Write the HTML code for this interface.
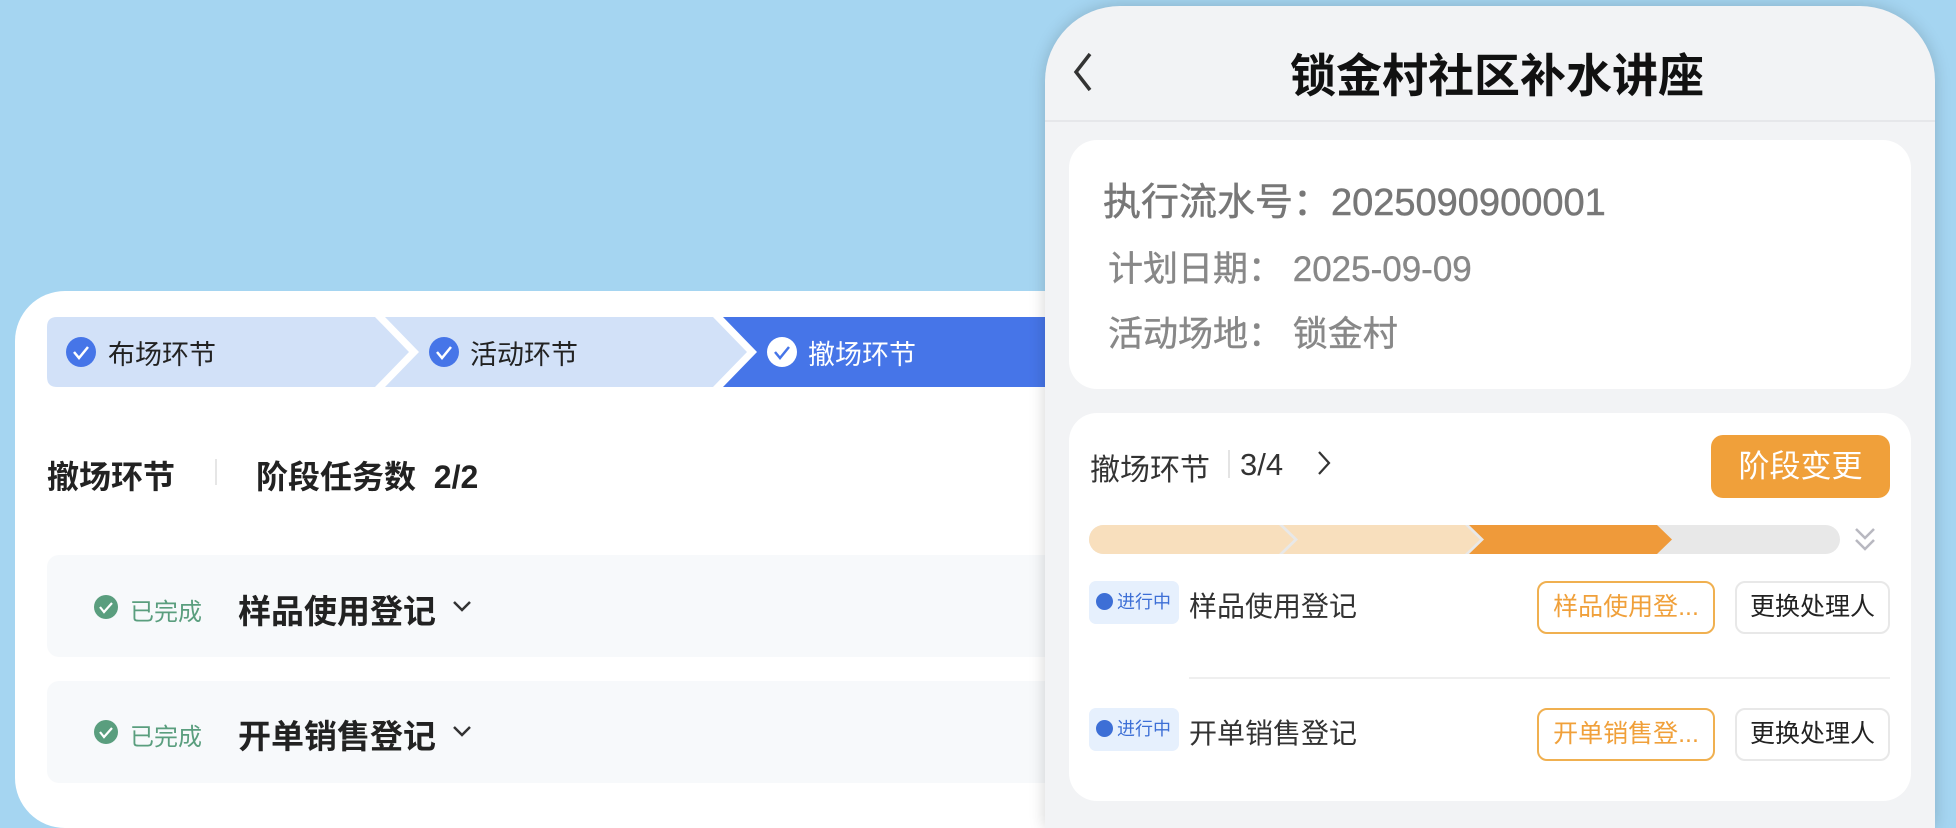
<!DOCTYPE html>
<html><head><meta charset="utf-8"><style>
*{margin:0;padding:0;box-sizing:border-box}
html{width:1956px;height:828px;overflow:hidden}
body{width:1956px;height:828px;background:#a5d5f1;position:relative;overflow:hidden;font-family:"Liberation Sans","Noto Sans CJK SC",sans-serif}
.a{position:absolute;white-space:nowrap}
</style></head><body>
<div class="a" style="left:15px;top:291px;width:1100px;height:537px;background:#fff;border-radius:50px 50px 0 50px"></div>
<svg class="a" style="left:0;top:0" width="1100" height="828">
<path d="M57 317 H375 L409 352 L375 387 H57 Q47 387 47 377 V327 Q47 317 57 317Z" fill="#d2e1f8"/>
<path d="M385 317 H713 L747 352 L713 387 H385 L419 352Z" fill="#d2e1f8"/>
<path d="M723 317 H1100 V387 H723 L757 352Z" fill="#4675e8"/>
<circle cx="81" cy="352" r="15" fill="#4675e8"/><path d="M74 352 l5 6 l9 -11" stroke="#fff" stroke-width="2.5" fill="none"/>
<circle cx="444" cy="352" r="15" fill="#4675e8"/><path d="M437 352 l5 6 l9 -11" stroke="#fff" stroke-width="2.5" fill="none"/>
<circle cx="782" cy="352" r="15" fill="#fff"/><path d="M775 352 l5 6 l9 -11" stroke="#4675e8" stroke-width="2.5" fill="none"/>
<line x1="216" y1="459" x2="216" y2="485" stroke="#e6e6e6" stroke-width="2"/>
</svg>
<div class="a" style="left:47px;top:555px;width:1060px;height:102px;background:#f7f9fb;border-radius:12px"></div>
<div class="a" style="left:47px;top:681px;width:1060px;height:102px;background:#f7f9fb;border-radius:12px"></div>
<svg class="a" style="left:0;top:0" width="1100" height="828">
<circle cx="106" cy="607" r="12" fill="#5a9e7e"/><path d="M100 607 l4 5 l8 -9" stroke="#fff" stroke-width="2.2" fill="none"/>
<circle cx="106" cy="732" r="12" fill="#5a9e7e"/><path d="M100 732 l4 5 l8 -9" stroke="#fff" stroke-width="2.2" fill="none"/>
<path d="M454 602 l8 8 l8 -8" stroke="#333" stroke-width="2.5" fill="none"/>
<path d="M454 727 l8 8 l8 -8" stroke="#333" stroke-width="2.5" fill="none"/>
</svg>
<div class="a" style="left:108px;top:333px;font-size:27px;color:#222">布场环节</div>
<div class="a" style="left:470px;top:333px;font-size:27px;color:#222">活动环节</div>
<div class="a" style="left:808px;top:333px;font-size:27px;color:#fff">撤场环节</div>
<div class="a" style="left:47px;top:452px;font-size:32px;font-weight:bold;color:#222">撤场环节</div>
<div class="a" style="left:256px;top:452px;font-size:32px;font-weight:bold;color:#222">阶段任务数&nbsp; 2/2</div>
<div class="a" style="left:130px;top:592px;font-size:24px;color:#5a9e7e">已完成</div>
<div class="a" style="left:238px;top:585px;font-size:33px;font-weight:bold;color:#222">样品使用登记</div>
<div class="a" style="left:130px;top:717px;font-size:24px;color:#5a9e7e">已完成</div>
<div class="a" style="left:238px;top:710px;font-size:33px;font-weight:bold;color:#222">开单销售登记</div>

<div class="a" style="left:1045px;top:6px;width:890px;height:822px;background:#f2f3f5;border-radius:75px 75px 0 0;box-shadow:0 0 16px rgba(0,0,0,.18)"></div>
<div class="a" style="left:1045px;top:120px;width:890px;height:2px;background:#e6e7ea"></div>
<svg class="a" style="left:1070px;top:50px" width="30" height="44"><path d="M20 4 L6 22 L20 40" stroke="#333" stroke-width="3.5" fill="none"/></svg>
<div class="a" style="left:1290px;top:40px;font-size:46px;font-weight:bold;color:#111">锁金村社区补水讲座</div>
<div class="a" style="left:1069px;top:140px;width:842px;height:249px;background:#fff;border-radius:28px"></div>
<div class="a" style="left:1103px;top:171px;font-size:38px;color:#777;-webkit-text-stroke:0.5px #777">执行流水号：2025090900001</div>
<div class="a" style="left:1108px;top:241px;font-size:35px;color:#888;-webkit-text-stroke:0.4px #888">计划日期：&nbsp;2025-09-09</div>
<div class="a" style="left:1108px;top:306px;font-size:35px;color:#888;-webkit-text-stroke:0.4px #888">活动场地：&nbsp;锁金村</div>
<div class="a" style="left:1069px;top:413px;width:842px;height:388px;background:#fff;border-radius:28px"></div>
<div class="a" style="left:1090px;top:445px;font-size:30px;color:#333">撤场环节</div>
<div class="a" style="left:1228px;top:450px;width:2px;height:28px;background:#e4e4e4"></div>
<div class="a" style="left:1240px;top:447px;font-size:31px;color:#333">3/4</div>
<svg class="a" style="left:1314px;top:448px" width="20" height="30"><path d="M5 4 L15 15 L5 26" stroke="#333" stroke-width="2.2" fill="none"/></svg>
<div class="a" style="left:1711px;top:435px;width:179px;height:63px;background:#f0a03a;border-radius:12px;color:#fff;font-size:31px;text-align:center;line-height:63px">阶段变更</div>
<svg class="a" style="left:1089px;top:525px" width="760" height="30">
<rect x="0" y="0" width="751" height="29" rx="14.5" fill="#e8e8e8"/>
<path d="M14.5 0 H190 L205 14.5 L190 29 H14.5 A14.5 14.5 0 0 1 14.5 0Z" fill="#f8dfbd"/>
<path d="M194 0 H376 L391 14.5 L376 29 H194 L209 14.5Z" fill="#f8dfbd"/>
<path d="M380 0 H568 L583 14.5 L568 29 H380 L395 14.5Z" fill="#ef9a3a"/>
</svg>
<svg class="a" style="left:1850px;top:525px" width="30" height="32"><path d="M6 4 l9 9 l9 -9 M6 15 l9 9 l9 -9" stroke="#b8b8c0" stroke-width="2.5" fill="none"/></svg>
<div class="a" style="left:1089px;top:581px;width:90px;height:43px;background:#e6f0fd;border-radius:7px;font-size:18px;color:#3d6fd6;line-height:43px;padding-left:28px">进行中</div>
<div class="a" style="left:1096px;top:593px;width:17px;height:17px;border-radius:50%;background:#3d6fd6"></div>
<div class="a" style="left:1189px;top:585px;font-size:28px;color:#333">样品使用登记</div>
<div class="a" style="left:1537px;top:581px;width:178px;height:53px;border:2px solid #f0b050;border-radius:10px;font-size:25px;color:#f0a03a;line-height:49px;text-align:center">样品使用登...</div>
<div class="a" style="left:1735px;top:581px;width:155px;height:53px;border:2px solid #e8e8e8;border-radius:10px;font-size:25px;color:#222;line-height:49px;text-align:center">更换处理人</div>
<div class="a" style="left:1189px;top:677px;width:701px;height:2px;background:#efefef"></div>
<div class="a" style="left:1089px;top:708px;width:90px;height:43px;background:#e6f0fd;border-radius:7px;font-size:18px;color:#3d6fd6;line-height:43px;padding-left:28px">进行中</div>
<div class="a" style="left:1096px;top:720px;width:17px;height:17px;border-radius:50%;background:#3d6fd6"></div>
<div class="a" style="left:1189px;top:712px;font-size:28px;color:#333">开单销售登记</div>
<div class="a" style="left:1537px;top:708px;width:178px;height:53px;border:2px solid #f0b050;border-radius:10px;font-size:25px;color:#f0a03a;line-height:49px;text-align:center">开单销售登...</div>
<div class="a" style="left:1735px;top:708px;width:155px;height:53px;border:2px solid #e8e8e8;border-radius:10px;font-size:25px;color:#222;line-height:49px;text-align:center">更换处理人</div>
</body></html>
